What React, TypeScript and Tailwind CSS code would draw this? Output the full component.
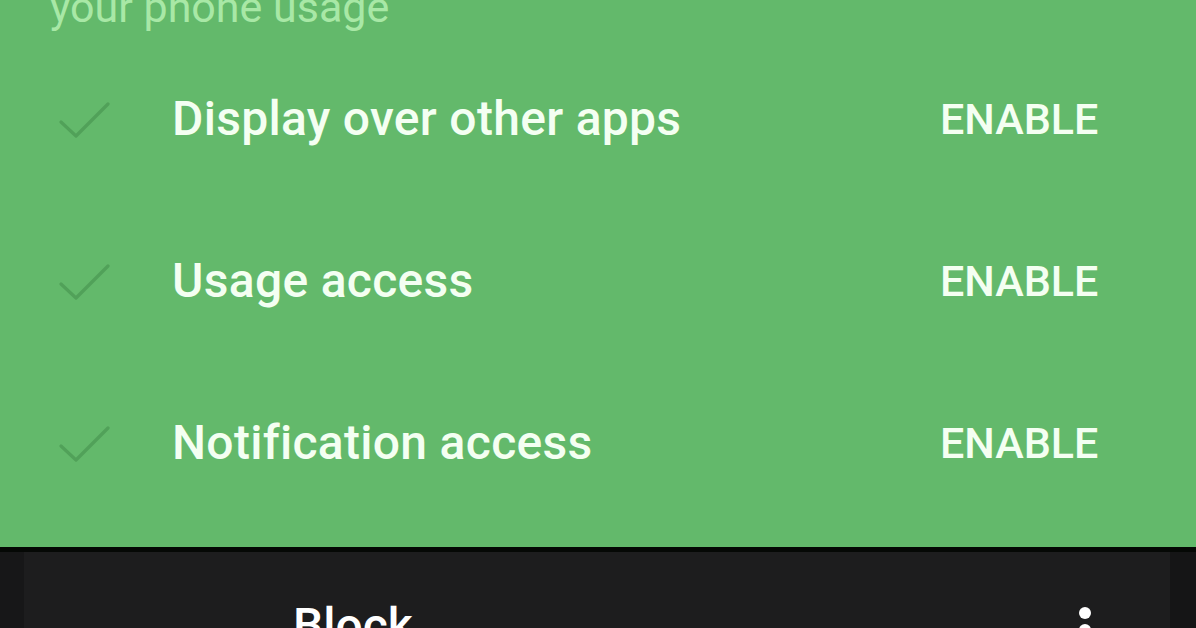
import React from 'react';

const rows = ['Display over other apps', 'Usage access', 'Notification access'];

const Check: React.FC = () => (
  <svg width="52" height="40" viewBox="0 0 52 40" fill="none">
    <path d="M3 22 L18 36 L50 4" stroke="#51a159" strokeWidth="3.2" strokeLinecap="round" strokeLinejoin="round" />
  </svg>
);

const PermissionRow: React.FC<{ label: string }> = ({ label }) => (
  <div className="h-[162px] flex items-center">
    <div className="w-[172px] shrink-0 pl-[58px] pt-[2px] flex items-center">
      <Check />
    </div>
    <span className="flex-1 text-[48px] tracking-[0.3px] font-medium text-[#f4fff2]">{label}</span>
    <span className="w-[256px] shrink-0 text-[43px] font-medium text-[#f4fff2]">ENABLE</span>
  </div>
);

export default function App() {
  return (
    <div className="w-[1196px] h-[628px] overflow-hidden bg-[#1a1a1b] font-['Roboto',sans-serif]">
      <div className="h-[547px] bg-[#63b96b] flex flex-col">
        <div className="h-[57px] shrink-0 pl-[50px] -mt-[19px] text-[43px] leading-[52px] text-[#a8e8a6]">your phone usage</div>
        <div>
          {rows.map((r) => (
            <PermissionRow key={r} label={r} />
          ))}
        </div>
      </div>
      <div className="h-[5px] bg-[#050805]" />
      <div className="flex h-[76px]">
        <div className="w-[24px] bg-[#171718]" />
        <div className="flex-1 bg-[#1d1d1e] relative">
          <div className="pl-[269px] pt-[50px] text-[48px] font-medium text-white leading-none">Block</div>
          <div className="absolute left-[1055px] top-[55px] flex flex-col gap-[5px]">
            <div className="w-[12px] h-[12px] rounded-full bg-white" />
            <div className="w-[12px] h-[12px] rounded-full bg-white" />
          </div>
        </div>
        <div className="w-[26px] bg-[#151516]" />
      </div>
    </div>
  );
}
